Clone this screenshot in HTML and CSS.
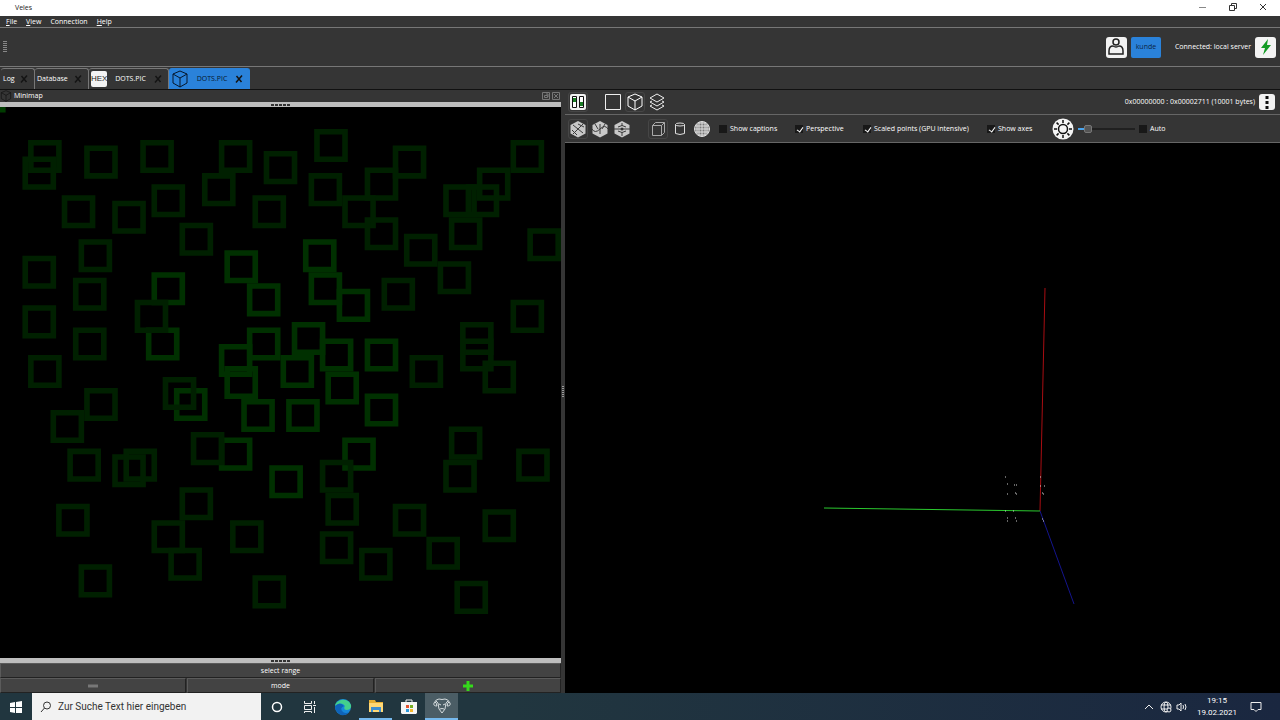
FILE: index.html
```html
<!DOCTYPE html>
<html lang="de">
<head>
<meta charset="utf-8">
<title>Veles</title>
<link rel="stylesheet" href="styles.css">
</head>
<body>
<svg class="defs" aria-hidden="true">
  <symbol id="cube" viewBox="0 0 18 18"><path d="M9 1 16 4v9l-7 4-7-4V4zM2 4l7 4 7-4M9 8v9" fill="none" stroke="currentColor" stroke-width="1"/></symbol>
  <symbol id="cross" viewBox="0 0 8 8"><path d="M1 7.500 7 .5M1.500 1l5 6" fill="none" stroke="currentColor" stroke-width="1.500"/></symbol>
  <path id="cell" d="M0 0h6v6h-6zM1 1v4h4v-4z"/>
  <path id="hex" d="M9 1 16.500 5v8.500L9 17.500 1.500 13.500V5z" fill="#c8c8c8"/>
</svg>

<header class="titlebar">
  <span class="title">Veles</span>
  <div class="window-buttons">
    <button aria-label="Minimize"><svg width="8" height="8"><path d="M0 4.500h7" stroke="#888"/></svg></button>
    <button aria-label="Restore"><svg width="8" height="8"><path d="M.5 2.500h5v5h-5zM2.500 2V.5h5v5H6" fill="none" stroke="#333"/></svg></button>
    <button aria-label="Close"><svg width="8" height="8"><path d="M1 1l6 6M7 1 1 7" stroke="#333"/></svg></button>
  </div>
</header>

<nav class="menubar">
  <button><u>F</u>ile</button><button><u>V</u>iew</button><button>Connection</button><button><u>H</u>elp</button>
</nav>

<section class="connection">
  <span class="grip"></span>
  <div class="connection-items">
    <button class="tile" aria-label="User"><svg width="18" height="18" viewBox="0 0 18 18"><g fill="none" stroke="#222" stroke-width="1.500"><circle cx="9" cy="4" r="3"/><path d="M2 16v-3q0-5 4-5 3 2 6 0 4 0 4 5v3z"/></g></svg></button>
    <button class="user">kunde</button>
    <span class="status">Connected: local server</span>
    <button class="tile" aria-label="Connection"><svg width="16" height="18" viewBox="0 0 16 18"><path d="M10 1 3 10h4l-2 7 8-10H9z" fill="#129b24"/></svg></button>
  </div>
</section>

<nav class="tabs">
  <div class="tab tab-log"><button>Log</button><button class="close" aria-label="Close Log"><svg width="8" height="8"><use href="#cross"/></svg></button></div>
  <div class="tab tab-db"><button>Database</button><button class="close" aria-label="Close Database"><svg width="8" height="8"><use href="#cross"/></svg></button></div>
  <div class="tab tab-hex"><span class="hex">HEX</span><button>DOTS.PIC</button><button class="close" aria-label="Close hex view"><svg width="8" height="8"><use href="#cross"/></svg></button></div>
  <div class="tab tab-active"><svg width="18" height="18"><use href="#cube"/></svg><button>DOTS.PIC</button><button class="close" aria-label="Close 3D view"><svg width="8" height="8"><use href="#cross"/></svg></button></div>
</nav>

<main class="workspace">
  <section class="minimap">
    <div class="dock-title">
      <svg class="dock-icon" width="12" height="12"><use href="#cube"/></svg><h2>Minimap</h2>
      <button aria-label="Float"><svg width="8" height="8"><path d="M.5.5h7v7h-7zM2.500 3.500h3v2h-3zM4 2h2v3" fill="none" stroke="#777"/></svg></button>
      <button aria-label="Close"><svg width="8" height="8"><path d="M.5.5h7v7h-7zM2 2l4 4M6 2 2 6" fill="none" stroke="#777"/></svg></button>
    </div>
    <div class="handle"><span></span></div>
    <div class="map"><svg id="map" viewBox="0 0 100 100" preserveAspectRatio="none" role="img" aria-label="Minimap"></svg></div>
    <div class="handle"><span></span></div>
    <button class="flat">select range</button>
    <div class="modes">
      <button class="flat" aria-label="Decrease"><svg width="12" height="10"><path d="M1 3.500h10v3H1z" fill="#777"/></svg></button>
      <button class="flat">mode</button>
      <button class="flat" aria-label="Increase"><svg width="12" height="12"><path d="M6 1v10M1 6h10" stroke="#35d91b" stroke-width="3"/></svg></button>
    </div>
  </section>
  <div class="splitter"><span></span></div>
  <section class="view">
    <div class="toolbar range">
      <button class="tool framed" aria-label="Minimap"><svg width="18" height="18"><rect x="1" y="1" width="16" height="16" rx="2" fill="#f2f2f2"/><path d="M3.500 3.500h4v11h-4zM10.500 3.500h4v11h-4z" fill="#fff" stroke="#111"/><path d="M4 5h3v4H4zM11 9h3v4h-3z" fill="#197c24"/></svg></button>
      <button class="tool gap-before" aria-label="2D"><svg width="18" height="18"><path d="M1.500 1.500h15v15h-15z" fill="none" stroke="#eee"/></svg></button>
      <button class="tool framed" aria-label="3D"><svg width="18" height="18"><use href="#cube"/></svg></button>
      <button class="tool" aria-label="Layers"><svg width="18" height="18" fill="none" stroke="#eee"><path d="m9 1 7 4-7 4-7-4zM4 8 2 9l7 4 7-4-2-1M4 12l-2 1 7 4 7-4-2-1"/></svg></button>
      <span class="bytes">0x00000000 : 0x00002711 (10001 bytes)</span>
      <button class="tile small" aria-label="More"><svg width="16" height="16"><path d="M8 2v3M8 7v3M8 12v3" stroke="#111" stroke-width="3"/></svg></button>
    </div>
    <div class="toolbar options">
      <button class="tool framed" aria-label="Digram"><svg width="18" height="18"><use href="#hex"/><path d="m4 5 10 8M14 4 4 14M3 10l5 5M9 4l6 3" fill="none" stroke="#3b3b3b"/></svg></button>
      <button class="tool" aria-label="Trigram"><svg width="18" height="18"><use href="#hex"/><path d="M1 9q3 5 8 0t8 0M9 4v10M4 4l3 5M14 4l-3 5" fill="none" stroke="#3b3b3b"/></svg></button>
      <button class="tool" aria-label="Layered digram"><svg width="18" height="18"><use href="#hex"/><path d="M1 9h16M5 7q4-3 8 0M5 11q4 3 8 0M9 3v3M9 12v4" fill="none" stroke="#3b3b3b"/><circle cx="9" cy="9" r="1.500" fill="#333"/></svg></button>
      <button class="tool framed gap-shape" aria-label="Cube"><svg width="18" height="18" fill="none" stroke="#aaa"><path d="M3.500 5.500h9v10h-9zM3.500 5.500l3-3h9v10l-3 3M12.500 5.500l3-3"/></svg></button>
      <button class="tool" aria-label="Cylinder"><svg width="18" height="18" fill="none" stroke="#ddd"><ellipse cx="9" cy="4.500" rx="4.500" ry="1.500"/><path d="M4.500 4.500v9q4.500 2 9 0v-9"/></svg></button>
      <button class="tool" aria-label="Sphere"><svg width="18" height="18" fill="none" stroke="#ddd"><circle cx="9" cy="9" r="7.500" fill="#777"/><path d="M2 6h14M1 9h16M2 12h14M5 3h8M5 15h8M9 1v16M6 2v14M12 2v14M4 4v10M14 4v10"/></svg></button>
      <label class="captions"><input type="checkbox">Show captions</label>
      <label class="perspective"><input type="checkbox" checked>Perspective</label>
      <label class="scaled"><input type="checkbox" checked>Scaled points (GPU intensive)</label>
      <label class="axes"><input type="checkbox" checked>Show axes</label>
      <svg width="22" height="22" viewBox="0 0 22 22"><circle cx="11" cy="11" r="10.500" fill="#f4f4f4"/><g fill="none" stroke="#111" stroke-width="1.500"><circle cx="11" cy="11" r="4.500"/><path d="M11 2v3M11 17v3M2 11h3M17 11h3M4.600 4.600l2 2M15.400 15.400l2 2M4.600 17.400l2-2M15.400 6.600l2-2"/></g></svg>
      <input class="slider" type="range" min="0" max="100" value="13" aria-label="Brightness">
      <label class="auto"><input type="checkbox">Auto</label>
    </div>
    <div class="scene">
      <svg viewBox="0 0 715 550" role="img" aria-label="3D view">
        <path d="m480 145-5 223" stroke="#a80d12"/>
        <path d="m259 365 216 3" stroke="#2bc92f"/>
        <path d="m475 368 34 93" stroke="#14148c"/>
        <path class="points" d="M440 334h1M442 341h1M449 342h1M451 342h1M442 351h1M450 350h1M451 351h1M475 334h1M475 343h1M479 343h1M477 350h1M478 351h1M440 368h1M448 368h1M442 375h1M442 378h1M450 375h1M451 378h1M477 376h1M478 378h1"/>
      </svg>
    </div>
  </section>
</main>

<footer class="taskbar">
  <button class="start" aria-label="Start"><svg width="12" height="12" fill="#fff"><path d="m0 2 5-1v5H0zM6 1l6-1v6H6zM0 7h5v5l-5-1zM6 7h6v5.500L6 12z"/></svg></button>
  <label class="search"><svg width="12" height="12" fill="none" stroke="#333"><circle cx="7" cy="4.500" r="3.500"/><path d="M4.500 7 1 11"/></svg><input type="text" aria-label="Suche" placeholder="Zur Suche Text hier eingeben"></label>
  <button class="app" aria-label="Cortana"><svg width="12" height="12"><circle cx="6" cy="6" r="4.500" fill="none" stroke="#fff" stroke-width="1.500"/></svg></button>
  <button class="app" aria-label="Task View"><svg width="12" height="12" fill="none" stroke="#eee"><path d="M.5 0v2.500h7V0M.5 4.500h7v4h-7zM.5 12V10.500h7V12M10.500 0v3M10.500 6v6M9 4.500h3"/></svg></button>
  <button class="app" aria-label="Edge"><svg width="18" height="18"><circle cx="9" cy="9" r="8" fill="#1687d9"/><path d="M1 8C2 1 14-1 17 7q1 5-5 5-3-1-1-4-3-5-10 0" fill="#43cf8d"/><path d="M1 8q5-5 9 0-5 2-1 6 3 2 6 0-3 4-8 3Q1 14 1 8" fill="#0f63b8"/></svg></button>
  <button class="app running" aria-label="Explorer"><svg width="16" height="14"><path d="M1 1h6l1 2h7v10H1z" fill="#e5ae33"/><path d="M1 4h14v9H1z" fill="#ffd875"/><path d="M3 8h10v5h-2v-2H5v2H3z" fill="#3e8ed0"/></svg></button>
  <button class="app" aria-label="Store"><svg width="16" height="18"><path d="M5 5V2h6v3" fill="none" stroke="#eee"/><path d="M0 4h16v11l-1 1H1l-1-1z" fill="#f5f5f5"/><path d="M5 7h3v3H5z" fill="#e45432"/><path d="M9 7h3v3H9z" fill="#76ae23"/><path d="M5 11h3v3H5z" fill="#2e9bdc"/><path d="M9 11h3v3H9z" fill="#f4b62c"/></svg></button>
  <button class="app running current" aria-label="Veles"><svg width="18" height="16" fill="none" stroke="#d5dcde"><path d="M4 8Q0 8 1 5q2-4 5-4 3 1 6 0 3 0 5 4 1 3-3 3M4 8q-2-3 1-4M14 8q2-3-1-4M5 5l1 6 3 4 3-4 1-6M6 6l2 1M12 6l-2 1M7 11q2-1 4 0M2 5l2-2M16 5l-2-2"/></svg></button>
  <div class="tray">
    <svg width="10" height="8" fill="none" stroke="#eee"><path d="m1 6 4-4 4 4"/></svg>
    <svg width="12" height="12" fill="none" stroke="#eee"><circle cx="6" cy="6" r="5"/><ellipse cx="6" cy="6" rx="2" ry="5"/><path d="M1 4h10M1 8h10"/><circle cx="9" cy="9" r="2" fill="#1b2940"/></svg>
    <svg width="12" height="10" fill="none" stroke="#eee"><path d="M1 4v3h2l2 2V1L3 3H1zM7 3q1 2 0 4M9 2q2 3 0 6"/></svg>
    <time><span>19:15</span><span>19.02.2021</span></time>
    <button aria-label="Notifications"><svg width="12" height="12" fill="none" stroke="#eee"><path d="M1 1.500h10v7H8l-2 2-2-2H1z"/></svg></button>
  </div>
</footer>
<script src="minimap.js"></script>
</body>
</html>
```
FILE: styles.css
```css
* { box-sizing: border-box; }
body {
  margin: 0;
  height: 100vh;
  display: flex;
  flex-direction: column;
  overflow: hidden;
  background: #353535;
  color: #fff;
  font: 7px/10px "Open Sans", "Noto Sans", sans-serif;
}
button { border: 0; padding: 0; margin: 0; background: none; color: inherit; font: inherit; }
svg { display: block; flex: none; }
button svg { margin: auto; }
.defs { position: absolute; width: 0; height: 0; }

.titlebar { height: 16px; flex: none; display: flex; align-items: center; justify-content: space-between; padding: 0 13px 0 15px; background: #fff; color: #222; }
.window-buttons { display: flex; gap: 22px; padding-bottom: 3px; }
.menubar { height: 12px; flex: none; display: flex; align-items: center; gap: 9px; padding-left: 6px; border-bottom: 1px solid #777; }
.connection { height: 38px; flex: none; display: flex; align-items: center; justify-content: space-between; padding: 0 4px 0 3px; }
.grip { width: 4px; height: 12px; background: repeating-linear-gradient(#888 0 1px, #353535 1px 2px); }
.connection-items { display: flex; align-items: center; gap: 4px; }
.tile { width: 21px; height: 21px; border-radius: 3px; background: #f3f3f3; }
.small { width: 16px; height: 16px; }
.user { width: 30px; height: 21px; border-radius: 2px; background: #2a82da; color: #0b2545; }
.status { padding-left: 10px; }

.tabs { height: 24px; flex: none; display: flex; padding-left: 1px; border-top: 1px solid #777; border-bottom: 1px solid #111; }
.tab { display: flex; align-items: center; justify-content: space-between; padding: 0 6px 0 2px; border: 1px solid #777; border-width: 1px 1px 0 0; border-radius: 3px 3px 0 0; margin-top: 1px; }
.close { color: #141414; }
.tab-log { width: 34px; }
.tab-db { width: 54px; }
.tab-hex { width: 80px; }
.tab-active { width: 81px; background: #2a82da; border-color: #2a82da; color: #06172b; }
.hex { width: 16px; border-radius: 2px; background: #f3f3f3; color: #222; font: 8px/16px "Liberation Sans", sans-serif; text-align: center; }

.workspace { flex: 1; min-height: 0; display: flex; }
.minimap { flex: 561 1 0; min-width: 0; display: flex; flex-direction: column; }
.dock-title { height: 12px; flex: none; display: flex; align-items: center; gap: 2px; padding-right: 1px; }
.dock-icon { color: #111; }
.dock-title h2 { margin: 0; flex: 1; font: inherit; }
.handle { height: 5px; flex: none; display: flex; align-items: center; justify-content: center; background: #bebebe; }
.handle span { width: 19px; height: 2px; background: repeating-linear-gradient(90deg, #333 0 3px, #bebebe 3px 4px); }
.map { flex: 1; min-height: 0; background: #000; }
.map svg { width: 100%; height: 100%; }
.bright { fill: #003000; }
.dim { fill: #002000; }
.flat { height: 15px; flex: none; border: 1px solid #5b5b5b; border-right-color: #222; border-bottom-color: #222; background: #434343; }
.modes { display: grid; grid-template-columns: repeat(3, 1fr); gap: 1px; }
.splitter { width: 4px; flex: none; display: flex; align-items: center; justify-content: center; }
.splitter span { width: 2px; height: 12px; background: repeating-linear-gradient(#999 0 1px, #353535 1px 2px); }

.view { flex: 715 1 0; min-width: 0; display: flex; flex-direction: column; }
.toolbar { flex: none; display: flex; align-items: center; gap: 4px; padding: 0 5px 0 4px; border-bottom: 1px solid #666; }
.range { height: 25px; }
.options { height: 28px; }
.tool { width: 18px; height: 18px; flex: none; }
.framed { outline: 1px solid #464646; border-radius: 2px; }
.gap-before { margin-left: 13px; }
.gap-shape { margin-left: 14px; }
.bytes { margin-left: auto; }
label { display: flex; align-items: center; gap: 3px; white-space: nowrap; }
.captions { width: 72px; margin-left: 4px; }
.perspective { width: 64px; }
.scaled { width: 120px; }
.axes { width: 61px; }
input[type="checkbox"] { appearance: none; width: 8px; height: 8px; margin: 0; background: #181818; }
input[type="checkbox"]:checked { position: relative; }
input[type="checkbox"]:checked::after { content: ""; position: absolute; left: 3px; top: 1px; width: 3px; height: 5px; border: solid #fff; border-width: 0 1px 1px 0; transform: rotate(35deg); }
.slider { appearance: none; width: 57px; height: 10px; margin: 0; background: linear-gradient(90deg, #49a4ee 6px, #202020 6px) center / 100% 2px no-repeat; }
.slider::-webkit-slider-thumb { appearance: none; width: 8px; height: 8px; border: 1px solid #777; border-radius: 2px; background: #555; }
.scene { flex: 1; min-height: 0; background: #000; }
.scene svg { width: 100%; height: 100%; }
.points { stroke: #ccc; }

.taskbar { height: 27px; flex: none; display: flex; background: linear-gradient(90deg, #21363f 40%, #1a2740); }
.start { width: 32px; }
.search { width: 229px; padding: 0 8px; gap: 6px; background: #f2f2f2; color: #333; }
.search input { flex: 1; min-width: 0; border: 0; padding: 0; background: none; font: 10px/14px Roboto, "Open Sans", sans-serif; outline: 0; }
.search input::placeholder { color: #333; opacity: 1; }
.app { width: 33px; }
.search + .app { width: 32px; }
.running { border-bottom: 2px solid #76b9ed; }
.current { background: #4b5d65; }
.tray { margin-left: auto; display: flex; align-items: center; gap: 4px; padding-right: 16px; }
.tray svg:first-child { margin-right: 2px; }
.tray time { display: flex; flex-direction: column; width: 42px; margin-left: 4px; font: 8px/12px Roboto, "Open Sans", sans-serif; text-align: center; }
.tray button { margin-left: 8px; }
```
FILE: minimap.js
```js
// Column and row of each 6x6 dot outline on the 100x100 byte map.
const bright = [[40,26],[27,30],[44,32],[26,40],[44,40],[39,43],[40,47],[54,24],[55,30],[60,33],[52,39],[57,42],[65,42],[50,45],[58,48],[31,51],[43,53],[51,53],[65,52],[39,60],[48,65],[61,60]];
const dim = [[5,6],[4,9],[15,7],[25,6],[39,6],[47,8],[11,16],[20,17],[27,14],[36,12],[45,16],[32,21],[14,24],[4,27],[13,31],[24,35],[4,36],[13,40],[5,45],[56,4],[70,7],[55,12],[65,11],[61,16],[65,20],[91,6],[85,11],[79,14],[83,14],[80,20],[94,22],[72,23],[78,28],[68,31],[91,35],[82,39],[82,42],[73,45],[86,46],[29,49],[15,51],[9,55],[12,62],[20,63],[22,62],[34,59],[32,69],[27,75],[30,80],[10,72],[41,75],[14,83],[45,85],[57,64],[58,70],[57,77],[64,80],[70,72],[76,78],[81,86],[86,73],[92,62],[80,58],[79,64]];
const draw = (list, name) => list.map(([x, y]) => `<use href="#cell" class="${name}" x="${x}" y="${y}"/>`).join("");
document.getElementById("map").innerHTML = '<path d="M0 0h1v1h-1z" fill="#003c00"/>' + draw(bright, "bright") + draw(dim, "dim");
```
